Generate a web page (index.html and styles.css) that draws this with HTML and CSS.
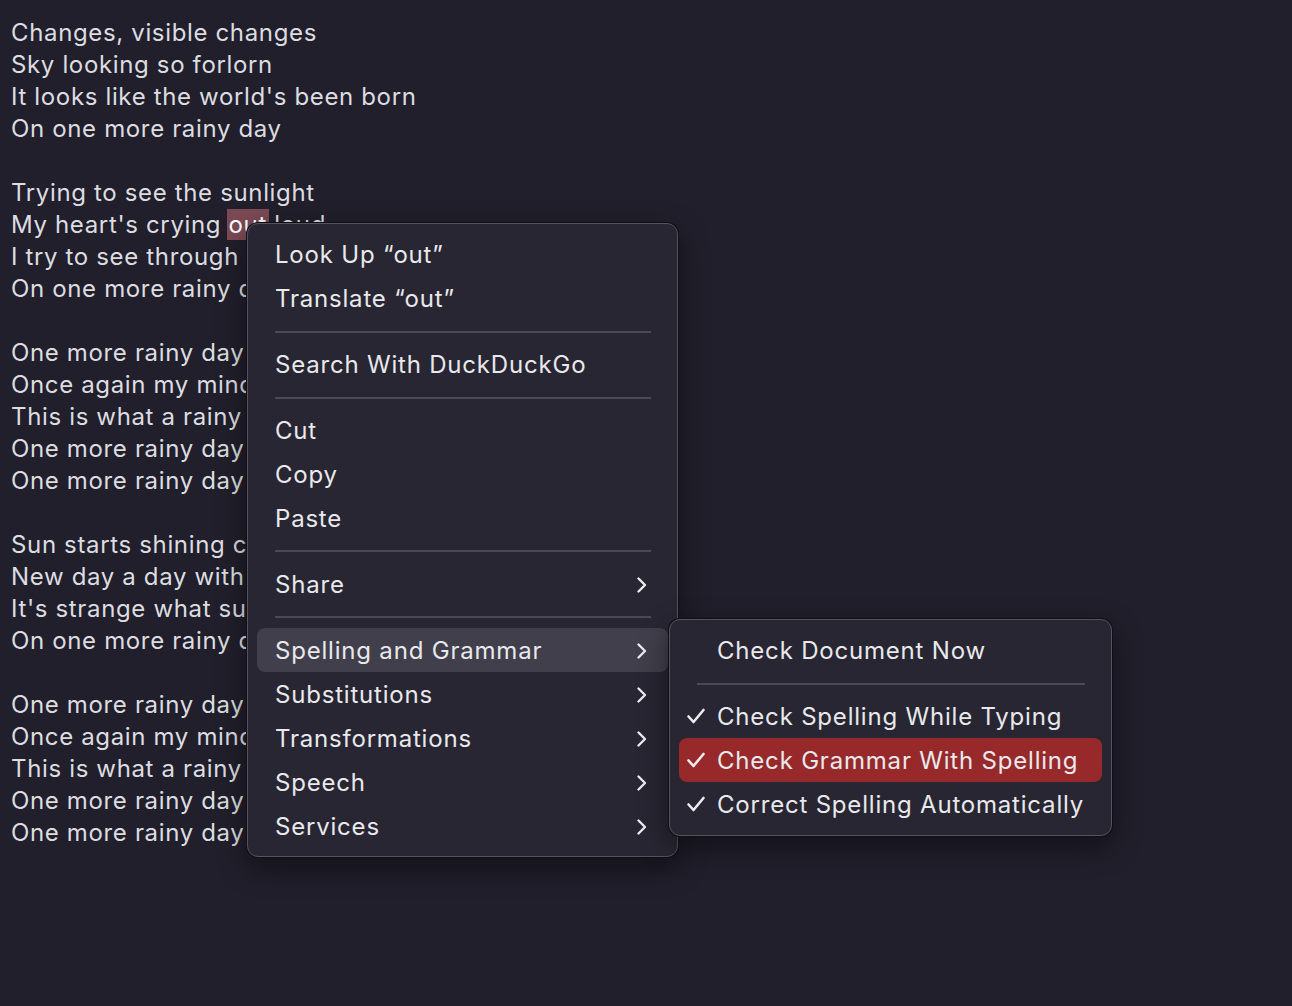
FILE: index.html
```html
<!DOCTYPE html>
<html>
<head>
<meta charset="utf-8">
<link rel="stylesheet" href="styles.css">
</head>
<body>
<div class="lyrics">
  <p>Changes, visible changes</p>
  <p>Sky looking so forlorn</p>
  <p>It looks like the world's been born</p>
  <p>On one more rainy day</p>
  <p class="blank"></p>
  <p>Trying to see the sunlight</p>
  <p>My heart's crying <span class="sel">out</span> loud</p>
  <p>I try to see through the clouds</p>
  <p>On one more rainy day</p>
  <p class="blank"></p>
  <p>One more rainy day</p>
  <p>Once again my mind is free</p>
  <p>This is what a rainy day brings</p>
  <p>One more rainy day</p>
  <p>One more rainy day</p>
  <p class="blank"></p>
  <p>Sun starts shining clear</p>
  <p>New day a day with love</p>
  <p>It's strange what sunlight does</p>
  <p>On one more rainy day</p>
  <p class="blank"></p>
  <p>One more rainy day</p>
  <p>Once again my mind is free</p>
  <p>This is what a rainy day brings</p>
  <p>One more rainy day</p>
  <p>One more rainy day</p>
</div>

<div class="menu main-menu">
  <div class="item">Look Up “out”</div>
  <div class="item">Translate “out”</div>
  <div class="sep"></div>
  <div class="item">Search With DuckDuckGo</div>
  <div class="sep"></div>
  <div class="item">Cut</div>
  <div class="item">Copy</div>
  <div class="item">Paste</div>
  <div class="sep"></div>
  <div class="item">Share<svg class="chev" viewBox="0 0 12 18"><path d="M2.5 2.5 L9 9 L2.5 15.5"/></svg></div>
  <div class="sep"></div>
  <div class="item hover">Spelling and Grammar<svg class="chev" viewBox="0 0 12 18"><path d="M2.5 2.5 L9 9 L2.5 15.5"/></svg></div>
  <div class="item">Substitutions<svg class="chev" viewBox="0 0 12 18"><path d="M2.5 2.5 L9 9 L2.5 15.5"/></svg></div>
  <div class="item">Transformations<svg class="chev" viewBox="0 0 12 18"><path d="M2.5 2.5 L9 9 L2.5 15.5"/></svg></div>
  <div class="item">Speech<svg class="chev" viewBox="0 0 12 18"><path d="M2.5 2.5 L9 9 L2.5 15.5"/></svg></div>
  <div class="item">Services<svg class="chev" viewBox="0 0 12 18"><path d="M2.5 2.5 L9 9 L2.5 15.5"/></svg></div>
</div>

<div class="menu sub-menu">
  <div class="item check-item">Check Document Now</div>
  <div class="sep"></div>
  <div class="item check-item"><svg class="check" viewBox="0 0 20 18"><path d="M2.5 9.5 L7.5 15 L17.5 3"/></svg>Check Spelling While Typing</div>
  <div class="item check-item active"><svg class="check" viewBox="0 0 20 18"><path d="M2.5 9.5 L7.5 15 L17.5 3"/></svg>Check Grammar With Spelling</div>
  <div class="item check-item"><svg class="check" viewBox="0 0 20 18"><path d="M2.5 9.5 L7.5 15 L17.5 3"/></svg>Correct Spelling Automatically</div>
</div>
</body>
</html>
```

FILE: styles.css
```css
html, body {
  margin: 0;
  padding: 0;
  background: #201f2b;
  height: 100%;
}
body {
  font-family: Inter, "Noto Sans", "Liberation Sans", sans-serif;
  font-size: 24px;
  color: #dddde0;
  overflow: hidden;
}
.lyrics {
  padding: 17px 11px;
  letter-spacing: 0.65px;
}
.lyrics p {
  margin: 0;
  height: 32px;
  line-height: 32px;
  white-space: nowrap;
}
.sel {
  background: #7b4a55;
  color: #fff;
  display: inline-block;
  line-height: 31px;
  padding: 0 2px;
  margin: 0 -2px;
}
.menu {
  position: absolute;
  box-sizing: border-box;
  background: #272632;
  border: 1px solid #55545e;
  box-shadow: 0 0 0 1px #0f0f15, 0 10px 30px rgba(0,0,0,0.45);
  border-radius: 11px;
  color: #e9e9ec;
  letter-spacing: 0.8px;
  display: flex;
  flex-direction: column;
}
.main-menu {
  left: 247px;
  top: 223px;
  width: 431px;
  height: 634px;
  padding: 9px 9px 8px;
}
.sub-menu {
  left: 669px;
  top: 619px;
  width: 443px;
  height: 217px;
  padding: 9px 9px;
}
.item {
  height: 44px;
  line-height: 44px;
  padding: 0 20px 0 18px;
  box-sizing: border-box;
  border-radius: 8px;
  display: flex;
  align-items: center;
  justify-content: space-between;
  white-space: nowrap;
}
.sep + .item,
.sep + .item ~ .item {
  padding-top: 1px;
}
.item.hover {
  background: #403f4b;
}
.chev {
  width: 12px;
  height: 18px;
  fill: none;
  stroke: #ececef;
  stroke-width: 2.4;
  stroke-linecap: round;
  stroke-linejoin: round;
}
.sep {
  height: 22px;
  margin: 0 17px 0 18px;
  display: flex;
  align-items: center;
}
.sep::before {
  content: "";
  flex: 1;
  height: 2px;
  background: #4a4954;
}
.check-item {
  justify-content: flex-start;
  padding-left: 38px;
  position: relative;
}
.check {
  position: absolute;
  left: 7px;
  top: 13px;
  width: 20px;
  height: 18px;
  fill: none;
  stroke: #ececef;
  stroke-width: 2.6;
  stroke-linecap: round;
  stroke-linejoin: round;
}
.item.active {
  background: #97292b;
}
```
